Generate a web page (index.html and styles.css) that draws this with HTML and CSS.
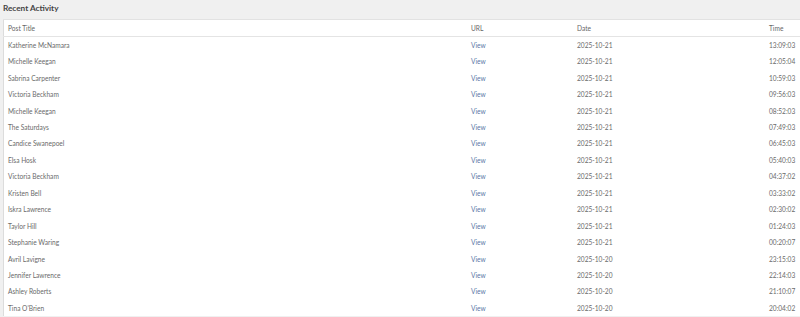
FILE: index.html
```html
<!DOCTYPE html>
<html>
<head>
<meta charset="utf-8">
<link rel="stylesheet" href="styles.css">
</head>
<body>
<div class="panel">
  <h2 class="title">Recent Activity</h2>
  <table class="activity">
    <thead>
      <tr><th class="c-title">Post Title</th><th class="c-url">URL</th><th class="c-date">Date</th><th class="c-time">Time</th></tr>
    </thead>
    <tbody>
      <tr><td>Katherine McNamara</td><td><a href="#">View</a></td><td>2025-10-21</td><td>13:09:03</td></tr>
      <tr><td>Michelle Keegan</td><td><a href="#">View</a></td><td>2025-10-21</td><td>12:05:04</td></tr>
      <tr><td>Sabrina Carpenter</td><td><a href="#">View</a></td><td>2025-10-21</td><td>10:59:03</td></tr>
      <tr><td>Victoria Beckham</td><td><a href="#">View</a></td><td>2025-10-21</td><td>09:56:03</td></tr>
      <tr><td>Michelle Keegan</td><td><a href="#">View</a></td><td>2025-10-21</td><td>08:52:03</td></tr>
      <tr><td>The Saturdays</td><td><a href="#">View</a></td><td>2025-10-21</td><td>07:49:03</td></tr>
      <tr><td>Candice Swanepoel</td><td><a href="#">View</a></td><td>2025-10-21</td><td>06:45:03</td></tr>
      <tr><td>Elsa Hosk</td><td><a href="#">View</a></td><td>2025-10-21</td><td>05:40:03</td></tr>
      <tr><td>Victoria Beckham</td><td><a href="#">View</a></td><td>2025-10-21</td><td>04:37:02</td></tr>
      <tr><td>Kristen Bell</td><td><a href="#">View</a></td><td>2025-10-21</td><td>03:33:02</td></tr>
      <tr><td>Iskra Lawrence</td><td><a href="#">View</a></td><td>2025-10-21</td><td>02:30:02</td></tr>
      <tr><td>Taylor Hill</td><td><a href="#">View</a></td><td>2025-10-21</td><td>01:24:03</td></tr>
      <tr><td>Stephanie Waring</td><td><a href="#">View</a></td><td>2025-10-21</td><td>00:20:07</td></tr>
      <tr><td>Avril Lavigne</td><td><a href="#">View</a></td><td>2025-10-20</td><td>23:15:03</td></tr>
      <tr><td>Jennifer Lawrence</td><td><a href="#">View</a></td><td>2025-10-20</td><td>22:14:03</td></tr>
      <tr><td>Ashley Roberts</td><td><a href="#">View</a></td><td>2025-10-20</td><td>21:10:07</td></tr>
      <tr><td>Tina O'Brien</td><td><a href="#">View</a></td><td>2025-10-20</td><td>20:04:02</td></tr>
    </tbody>
  </table>
</div>
</body>
</html>
```
FILE: styles.css
```css
html, body {
  margin: 0;
  padding: 0;
  background: #f0f0f0;
  overflow: hidden;
}
.panel {
  padding: 0 0 0 3px;
  font-family: Lato, "Open Sans", sans-serif;
}
.title {
  margin: 0;
  height: 19px;
  line-height: 16px;
  font-size: 8.2px;
  font-weight: 700;
  color: #444;
}
.activity {
  width: 797px;
  border-collapse: collapse;
  background: #fff;
  border-left: 1px solid #dcdcdc;
  border-top: 1px solid #e2e2e2;
  font-size: 6.6px;
  color: #6a6a6a;
  table-layout: fixed;
}
.activity th {
  font-weight: normal;
  text-align: left;
  height: 15.6px;
  padding: 0 4px;
  border-bottom: 1px solid #e4e4e4;
  color: #666;
}
.activity td {
  height: 16.45px;
  padding: 0 4px;
}
.c-title { width: 455px; }
.c-url { width: 98px; }
.c-date { width: 184px; }
.activity a {
  color: #5a78a6;
  text-decoration: none;
}
```
